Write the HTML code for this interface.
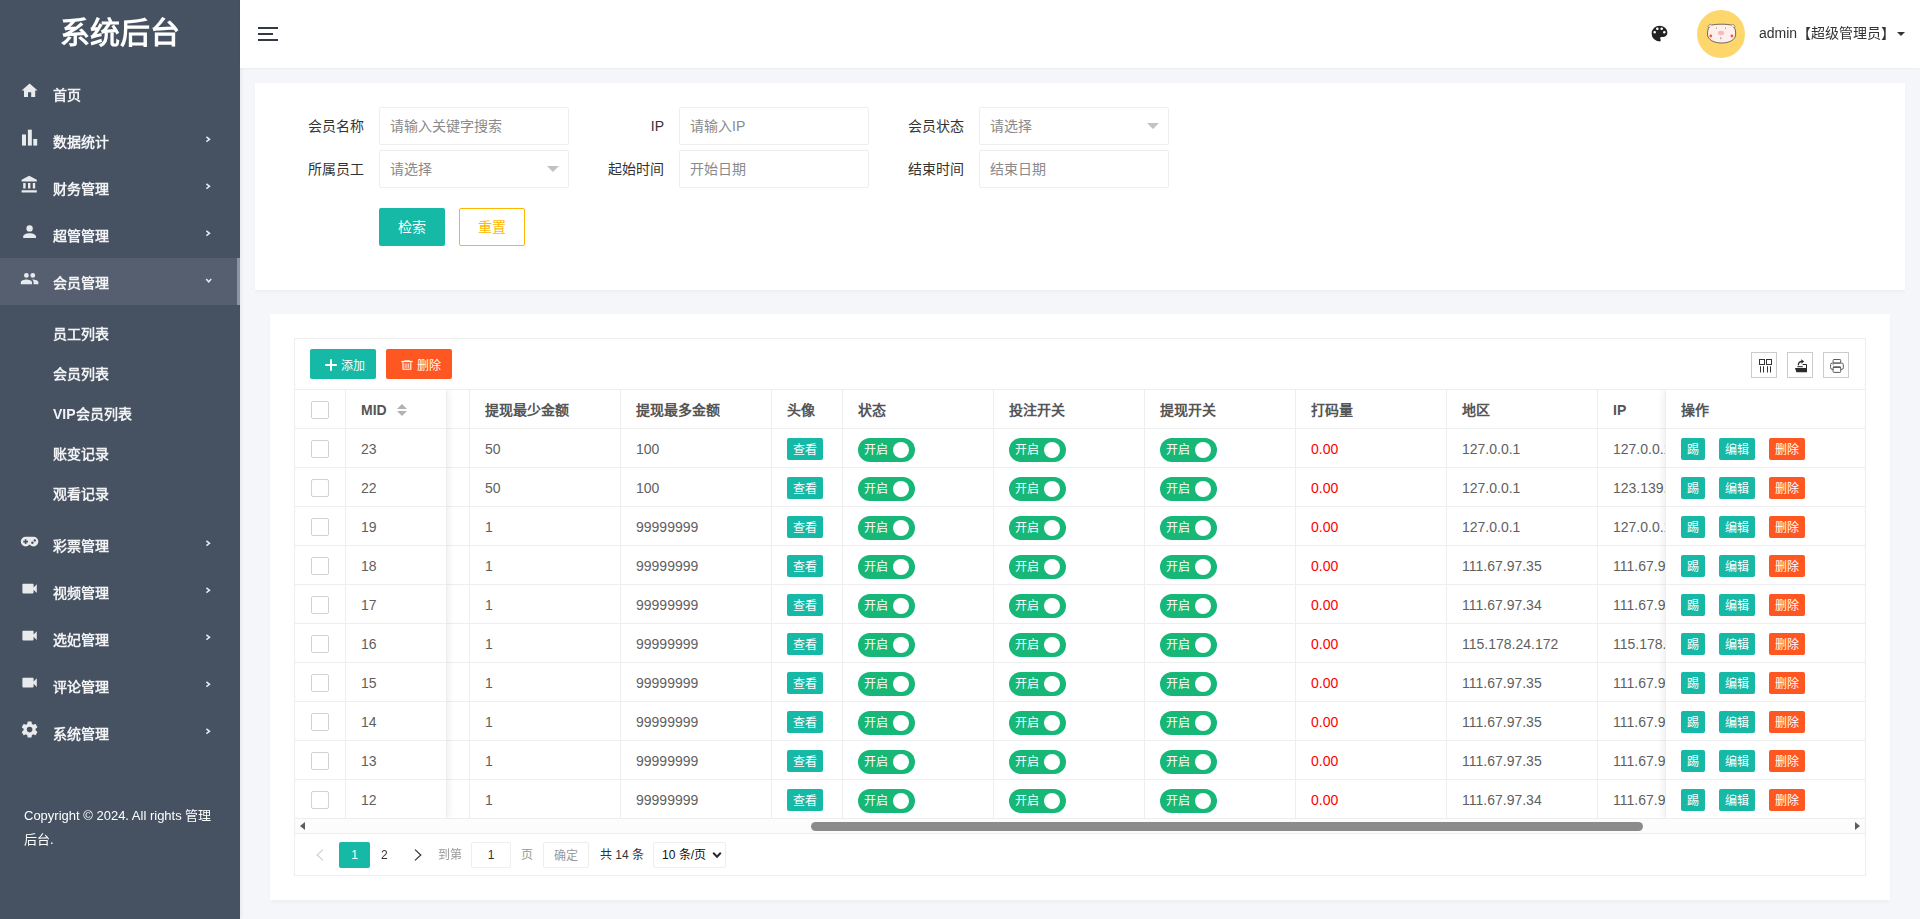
<!DOCTYPE html>
<html lang="zh-CN">
<head>
<meta charset="utf-8">
<title>系统后台</title>
<style>
*{box-sizing:border-box;margin:0;padding:0}
html,body{width:1920px;height:919px;overflow:hidden}
body{font-family:"Liberation Sans",sans-serif;font-size:14px;color:#333;background:#f5f6fa;position:relative}
div,span,svg{position:absolute}
#side{left:0;top:0;width:240px;height:919px;background:#465161;box-shadow:1px 0 4px rgba(0,10,30,.07)}
#logo{left:0;top:0;width:240px;height:68px;line-height:66px;text-align:center;font-size:30px;font-weight:bold;color:#fff}
.mi{left:0;width:240px;height:47px}
.mi.on{background:#555f70}
.mi.on i{position:absolute;right:0;top:0;width:3px;height:47px;background:#8d94a1}
.mt{left:53px;top:15px;line-height:20px;white-space:nowrap;color:#f2f3f4;font-weight:bold;font-size:14px}
.mi svg.ic{left:20.2px;top:10.7px;width:19.2px;height:19.2px;fill:#e9eaec}
.mi svg.ar{left:203px;top:17px;width:10px;height:10px;fill:none;stroke:#e9eaec;stroke-width:1.5}
.si{left:53px;color:#f2f3f4;font-weight:bold;font-size:14px;line-height:20px;white-space:nowrap}
#copy{left:24px;top:804px;width:210px;font-size:13px;line-height:23.5px;color:#fff;white-space:nowrap}
#hd{left:240px;top:0;width:1680px;height:68px;background:#fff;box-shadow:0 1px 2px rgba(0,0,0,.045)}
.card{background:#fff;box-shadow:0 2px 4px -1px rgba(0,0,0,.05)}
.lab{width:110px;height:38px;line-height:38px;text-align:right;padding-right:15px;font-size:14px;color:#333;white-space:nowrap}
.inp{width:190px;height:38px;border:1px solid #eee;border-radius:2px;background:#fff;line-height:36px;padding-left:10px;color:#8a8a8a;font-size:14px;white-space:nowrap}
.inp b{position:absolute;right:9px;top:15px;width:0;height:0;border:6px solid transparent;border-top-color:#c2c2c2;border-bottom:none}
.btn{text-align:center;color:#fff;background:#16b8a6;border-radius:2px;white-space:nowrap}
.tx{white-space:nowrap;line-height:20px}
.gl{will-change:transform}
.th{font-weight:bold;color:#555;font-size:14px;margin-top:1px}
.td{color:#5f5f5f;font-size:14px}
.hl{height:1px;background:#eee}
.vl{width:1px;background:#eee}
.cb{width:18px;height:18px;border:1px solid #d2d2d2;border-radius:2px;background:#fff}
.xs{height:22px;line-height:24px;font-size:12px;border-radius:2px;color:#fff;text-align:center;white-space:nowrap}
.sw{width:57px;height:24px;border-radius:12px;background:#16b777}
.sw em{position:absolute;left:6px;top:0;line-height:24px;font-size:12px;color:#fff;font-style:normal;white-space:nowrap}
.sw u{position:absolute;left:35px;top:4px;width:16px;height:16px;border-radius:8px;background:#fff}
.tb{width:26px;height:26px;border:1px solid #ccc;background:#fff}
</style>
</head>
<body>
<div id="side"><div class="gl" style="left:0;top:0;width:240px;height:919px">
<div id="logo">系统后台</div>
<div class="mi" style="top:70px"><svg class="ic" viewBox="0 0 24 24"><path d="M10,20V14H14V20H19V12H22L12,3L2,12H5V20H10Z"/></svg><span class="mt">首页</span></div>
<div class="mi" style="top:117px"><svg class="ic" viewBox="0 0 24 24"><rect x="2.5" y="8.1" width="5" height="13.9"/><rect x="9.9" y="2.1" width="4.9" height="19.9"/><rect x="16.6" y="13.7" width="4.9" height="8.3"/></svg><span class="mt">数据统计</span><svg class="ar" viewBox="0 0 10 10"><path d="M3.4 2.9 L6.5 5.3 L3.4 7.7"/></svg></div>
<div class="mi" style="top:164px"><svg class="ic" viewBox="0 0 24 24"><path d="M11.5,1L2,6V8H21V6M16,10V17H19V10M2,22H21V19H2M10,10V17H13V10M4,10V17H7V10H4Z"/></svg><span class="mt">财务管理</span><svg class="ar" viewBox="0 0 10 10"><path d="M3.4 2.9 L6.5 5.3 L3.4 7.7"/></svg></div>
<div class="mi" style="top:211px"><svg class="ic" viewBox="0 0 24 24"><path d="M12,4A4,4 0 0,1 16,8A4,4 0 0,1 12,12A4,4 0 0,1 8,8A4,4 0 0,1 12,4M12,14C16.42,14 20,15.79 20,18V20H4V18C4,15.79 7.58,14 12,14Z"/></svg><span class="mt">超管管理</span><svg class="ar" viewBox="0 0 10 10"><path d="M3.4 2.9 L6.5 5.3 L3.4 7.7"/></svg></div>
<div class="mi on" style="top:258px"><svg class="ic" viewBox="0 0 24 24"><path d="M16,13C15.71,13 15.38,13 15.03,13.05C16.19,13.89 17,15 17,16.5V19H23V16.5C23,14.17 18.33,13 16,13M8,13C5.67,13 1,14.17 1,16.5V19H15V16.5C15,14.17 10.33,13 8,13M8,11A3,3 0 0,0 11,8A3,3 0 0,0 8,5A3,3 0 0,0 5,8A3,3 0 0,0 8,11M16,11A3,3 0 0,0 19,8A3,3 0 0,0 16,5A3,3 0 0,0 13,8A3,3 0 0,0 16,11Z"/></svg><span class="mt">会员管理</span><svg class="ar" viewBox="0 0 10 10"><path d="M3.2 4.1 L5.7 6.8 L8.2 4.1"/></svg><i></i></div>
<span class="si" style="top:324px">员工列表</span>
<span class="si" style="top:364px">会员列表</span>
<span class="si" style="top:404px">VIP会员列表</span>
<span class="si" style="top:444px">账变记录</span>
<span class="si" style="top:484px">观看记录</span>
<div class="mi" style="top:521px"><svg class="ic" viewBox="0 0 24 24"><path d="M7,6H17A6,6 0 0,1 23,12A6,6 0 0,1 17,18C15.22,18 13.63,17.23 12.53,16H11.47C10.37,17.23 8.78,18 7,18A6,6 0 0,1 1,12A6,6 0 0,1 7,6M6,9V11H4V13H6V15H8V13H10V11H8V9H6M15.5,12A1.5,1.5 0 0,0 14,13.5A1.5,1.5 0 0,0 15.5,15A1.5,1.5 0 0,0 17,13.5A1.5,1.5 0 0,0 15.5,12M18.5,9A1.5,1.5 0 0,0 17,10.5A1.5,1.5 0 0,0 18.5,12A1.5,1.5 0 0,0 20,10.5A1.5,1.5 0 0,0 18.5,9Z"/></svg><span class="mt">彩票管理</span><svg class="ar" viewBox="0 0 10 10"><path d="M3.4 2.9 L6.5 5.3 L3.4 7.7"/></svg></div>
<div class="mi" style="top:568px"><svg class="ic" viewBox="0 0 24 24"><path d="M17,10.5V7A1,1 0 0,0 16,6H4A1,1 0 0,0 3,7V17A1,1 0 0,0 4,18H16A1,1 0 0,0 17,17V13.5L21,17.5V6.5L17,10.5Z"/></svg><span class="mt">视频管理</span><svg class="ar" viewBox="0 0 10 10"><path d="M3.4 2.9 L6.5 5.3 L3.4 7.7"/></svg></div>
<div class="mi" style="top:615px"><svg class="ic" viewBox="0 0 24 24"><path d="M17,10.5V7A1,1 0 0,0 16,6H4A1,1 0 0,0 3,7V17A1,1 0 0,0 4,18H16A1,1 0 0,0 17,17V13.5L21,17.5V6.5L17,10.5Z"/></svg><span class="mt">选妃管理</span><svg class="ar" viewBox="0 0 10 10"><path d="M3.4 2.9 L6.5 5.3 L3.4 7.7"/></svg></div>
<div class="mi" style="top:662px"><svg class="ic" viewBox="0 0 24 24"><path d="M17,10.5V7A1,1 0 0,0 16,6H4A1,1 0 0,0 3,7V17A1,1 0 0,0 4,18H16A1,1 0 0,0 17,17V13.5L21,17.5V6.5L17,10.5Z"/></svg><span class="mt">评论管理</span><svg class="ar" viewBox="0 0 10 10"><path d="M3.4 2.9 L6.5 5.3 L3.4 7.7"/></svg></div>
<div class="mi" style="top:709px"><svg class="ic" viewBox="0 0 24 24"><path d="M12,15.5A3.5,3.5 0 0,1 8.5,12A3.5,3.5 0 0,1 12,8.5A3.5,3.5 0 0,1 15.5,12A3.5,3.5 0 0,1 12,15.5M19.43,12.97C19.47,12.65 19.5,12.33 19.5,12C19.5,11.67 19.47,11.34 19.43,11L21.54,9.37C21.73,9.22 21.78,8.95 21.66,8.73L19.66,5.27C19.54,5.05 19.27,4.96 19.05,5.05L16.56,6.05C16.04,5.66 15.5,5.32 14.87,5.07L14.5,2.42C14.46,2.18 14.25,2 14,2H10C9.75,2 9.54,2.18 9.5,2.42L9.13,5.07C8.5,5.32 7.96,5.66 7.44,6.05L4.95,5.05C4.73,4.96 4.46,5.05 4.34,5.27L2.34,8.73C2.21,8.95 2.27,9.22 2.46,9.37L4.57,11C4.53,11.34 4.5,11.67 4.5,12C4.5,12.33 4.53,12.65 4.57,12.97L2.46,14.63C2.27,14.78 2.21,15.05 2.34,15.27L4.34,18.73C4.46,18.95 4.73,19.03 4.95,18.95L7.44,17.94C7.96,18.34 8.5,18.68 9.13,18.93L9.5,21.58C9.54,21.82 9.75,22 10,22H14C14.25,22 14.46,21.82 14.5,21.58L14.87,18.93C15.5,18.67 16.04,18.34 16.56,17.94L19.05,18.95C19.27,19.03 19.54,18.95 19.66,18.73L21.66,15.27C21.78,15.05 21.73,14.78 21.54,14.63L19.43,12.97Z"/></svg><span class="mt">系统管理</span><svg class="ar" viewBox="0 0 10 10"><path d="M3.4 2.9 L6.5 5.3 L3.4 7.7"/></svg></div>
</div>
<div id="copy">Copyright © 2024. All rights 管理<br>后台.</div>
</div>
<div id="hd">
<div style="left:18px;top:27px;width:20px;height:2px;background:#333a45"></div>
<div style="left:18px;top:33px;width:15px;height:2px;background:#333a45"></div>
<div style="left:18px;top:39px;width:20px;height:2px;background:#333a45"></div>
<svg viewBox="0 0 24 24" style="left:1409px;top:23px;width:21px;height:21px;fill:#222"><path d="M17.5,12A1.5,1.5 0 0,1 16,10.5A1.5,1.5 0 0,1 17.5,9A1.5,1.5 0 0,1 19,10.5A1.5,1.5 0 0,1 17.5,12M14.5,8A1.5,1.5 0 0,1 13,6.5A1.5,1.5 0 0,1 14.5,5A1.5,1.5 0 0,1 16,6.5A1.5,1.5 0 0,1 14.5,8M9.5,8A1.5,1.5 0 0,1 8,6.5A1.5,1.5 0 0,1 9.5,5A1.5,1.5 0 0,1 11,6.5A1.5,1.5 0 0,1 9.5,8M6.5,12A1.5,1.5 0 0,1 5,10.5A1.5,1.5 0 0,1 6.5,9A1.5,1.5 0 0,1 8,10.5A1.5,1.5 0 0,1 6.5,12M12,3A9,9 0 0,0 3,12A9,9 0 0,0 12,21A1.5,1.5 0 0,0 13.5,19.5C13.5,19.11 13.35,18.76 13.11,18.5C12.88,18.23 12.73,17.88 12.73,17.5A1.5,1.5 0 0,1 14.23,16H16A5,5 0 0,0 21,11C21,6.58 16.97,3 12,3Z"/></svg>
<svg viewBox="0 0 48 48" style="left:1457px;top:10px;width:48px;height:48px"><circle cx="24" cy="24" r="24" fill="#fdd76b"/><path d="M10.500 24 C10.500 19.500 11.500 16.500 14.500 15.200 C18 13.900 31 13.900 34.500 15.200 C37.500 16.500 38.700 19.500 38.700 24 C38.700 30 32 33 24.600 33 C17.200 33 10.500 30 10.500 24Z" fill="#fdefee" stroke="#3c3030" stroke-width=".7"/><ellipse cx="12.700" cy="16" rx="2" ry="1.300" transform="rotate(-38 12.700 16)" fill="#fbe0e0" stroke="#5a4848" stroke-width=".45"/><ellipse cx="36.300" cy="16" rx="2" ry="1.300" transform="rotate(38 36.300 16)" fill="#fbe0e0" stroke="#5a4848" stroke-width=".45"/><path d="M13.300 17.600 L15.200 15.800 M35.700 17.600 L33.800 15.800" stroke="#fdefee" stroke-width="1.600"/><ellipse cx="24" cy="23" rx="2.900" ry="1.900" fill="#f6bcbc" stroke="#d9a0a0" stroke-width=".3"/><circle cx="13.800" cy="26" r="1.400" fill="#ff5a2a"/><circle cx="34.900" cy="26" r="1.400" fill="#ff5a2a"/><rect x="19.200" y="17.600" width=".6" height="1.300" fill="#666"/><rect x="28.400" y="17.600" width=".6" height="1.300" fill="#666"/><path d="M23.800 27.200 v2" stroke="#555" stroke-width=".6"/></svg>
<div class="gl" style="left:1510px;top:15px;width:150px;height:36px"><span class="tx" style="left:9px;top:8px;color:#333">admin【超级管理员】</span></div>
<div style="left:1657px;top:32px;width:0;height:0;border:4px solid transparent;border-top-color:#333;border-bottom:none"></div>
</div>
<div class="card" style="left:255px;top:83px;width:1650px;height:207px">
<div class="lab" style="left:14px;top:24px">会员名称</div>
<div class="inp" style="left:124px;top:24px">请输入关键字搜索</div>
<div class="lab" style="left:314px;top:24px">IP</div>
<div class="inp" style="left:424px;top:24px">请输入IP</div>
<div class="lab" style="left:614px;top:24px">会员状态</div>
<div class="inp" style="left:724px;top:24px">请选择<b></b></div>
<div class="lab" style="left:14px;top:67px">所属员工</div>
<div class="inp" style="left:124px;top:67px">请选择<b></b></div>
<div class="lab" style="left:314px;top:67px">起始时间</div>
<div class="inp" style="left:424px;top:67px">开始日期</div>
<div class="lab" style="left:614px;top:67px">结束时间</div>
<div class="inp" style="left:724px;top:67px">结束日期</div>
<div class="btn" style="left:124px;top:125px;width:66px;height:38px;line-height:38px">检索</div>
<div class="btn" style="left:204px;top:125px;width:66px;height:38px;line-height:36px;background:#fff;border:1px solid #ffb800;color:#ffb800">重置</div>
</div>
<div class="card" style="left:270px;top:314px;width:1620px;height:586px">
<div style="left:24px;top:24px;width:1572px;height:538px;border:1px solid #eee"></div>
<div class="btn" style="left:40px;top:35px;width:66px;height:30px;line-height:30px;font-size:12px"><svg viewBox="0 0 12 12" style="left:15px;top:10.2px;width:12px;height:12px"><path d="M6 .2v11.6M.2 6h11.6" stroke="#fff" stroke-width="2"/></svg><span style="left:31px;top:2px">添加</span></div>
<div class="btn" style="left:116px;top:35px;width:66px;height:30px;line-height:30px;font-size:12px;background:#ff5722"><svg viewBox="0 0 12 10" style="left:15px;top:11px;width:12px;height:10px" fill="none" stroke="#fff"><path d="M3.6 1.1V.4H8.2V1.1" stroke-width=".8"/><path d="M.2 1.5H11.7" stroke-width="1.2"/><path d="M2 2.2V9.3H9.8V2.2" stroke-width="1.1"/><path d="M4.1 3.4V8.2M5.9 3.4V8.2M7.7 3.4V8.2" stroke-width=".8"/></svg><span style="left:31px;top:2px">删除</span></div>
<div class="tb" style="left:1481px;top:38px">
<svg viewBox="0 0 24 24" style="left:0;top:0;width:24px;height:24px" fill="none" stroke="#333" stroke-width="1"><rect x="7.5" y="6.5" width="5" height="5"/><rect x="14.5" y="6.5" width="5" height="5"/><path d="M8.5 13.3v6.200M11.5 13.3v6.200M15.5 13.3v6.200M18.5 13.3v6.200"/></svg>
</div>
<div class="tb" style="left:1517px;top:38px">
<svg viewBox="0 0 24 24" style="left:0;top:0;width:24px;height:24px"><path d="M7 15.100H19V19.200H8.400z" fill="#2b2b2b"/><path d="M9.400 13.700H14.800" fill="none" stroke="#2b2b2b" stroke-width="1"/><path d="M14.600 11.500H18.500V15.200" fill="none" stroke="#2b2b2b" stroke-width="1"/><path d="M10.300 12.300C10.300 9.700 11.600 8.500 13.800 8.500" fill="none" stroke="#2b2b2b" stroke-width="1.300"/><path d="M13.300 6.200L16.200 8.500L13.300 10.700z" fill="#2b2b2b"/></svg>
</div>
<div class="tb" style="left:1553px;top:38px">
<svg viewBox="0 0 24 24" style="left:0;top:0;width:24px;height:24px" fill="none" stroke="#5a5a5a" stroke-width="1"><rect x="9.100" y="6.500" width="7.600" height="3.600" rx=".8"/><rect x="6.600" y="10.100" width="12.700" height="6.300" rx="1.600"/><rect x="9.100" y="14.100" width="7.600" height="5.300" rx=".8" fill="#fff"/><path d="M9.100 14.100H16.700" stroke="#333"/><path d="M8.600 11.800h1.200" stroke-width=".8"/></svg>
</div>
<div class="hl" style="left:25px;top:75px;width:1570px"></div>
<div class="hl" style="left:25px;top:114px;width:1570px"></div>
<div class="hl" style="left:25px;top:153px;width:1570px"></div>
<div class="hl" style="left:25px;top:192px;width:1570px"></div>
<div class="hl" style="left:25px;top:231px;width:1570px"></div>
<div class="hl" style="left:25px;top:270px;width:1570px"></div>
<div class="hl" style="left:25px;top:309px;width:1570px"></div>
<div class="hl" style="left:25px;top:348px;width:1570px"></div>
<div class="hl" style="left:25px;top:387px;width:1570px"></div>
<div class="hl" style="left:25px;top:426px;width:1570px"></div>
<div class="hl" style="left:25px;top:465px;width:1570px"></div>
<div class="hl" style="left:25px;top:504px;width:1570px"></div>
<div class="vl" style="left:199px;top:76px;height:429px"></div>
<div class="vl" style="left:350px;top:76px;height:429px"></div>
<div class="vl" style="left:501px;top:76px;height:429px"></div>
<div class="vl" style="left:572px;top:76px;height:429px"></div>
<div class="vl" style="left:723px;top:76px;height:429px"></div>
<div class="vl" style="left:874px;top:76px;height:429px"></div>
<div class="vl" style="left:1025px;top:76px;height:429px"></div>
<div class="vl" style="left:1176px;top:76px;height:429px"></div>
<div class="vl" style="left:1327px;top:76px;height:429px"></div>
<span class="tx th" style="left:215px;top:85px">提现最少金额</span>
<span class="tx th" style="left:366px;top:85px">提现最多金额</span>
<span class="tx th" style="left:517px;top:85px">头像</span>
<span class="tx th" style="left:588px;top:85px">状态</span>
<span class="tx th" style="left:739px;top:85px">投注开关</span>
<span class="tx th" style="left:890px;top:85px">提现开关</span>
<span class="tx th" style="left:1041px;top:85px">打码量</span>
<span class="tx th" style="left:1192px;top:85px">地区</span>
<span class="tx th" style="left:1343px;top:85px">IP</span>
<span class="tx td" style="left:215px;top:125px">50</span>
<span class="tx td" style="left:366px;top:125px">100</span>
<div class="xs" style="left:517px;top:124px;width:36px;background:#16b8a6">查看</div>
<div class="sw" style="left:588px;top:124px"><em>开启</em><u></u></div>
<div class="sw" style="left:739px;top:124px"><em>开启</em><u></u></div>
<div class="sw" style="left:890px;top:124px"><em>开启</em><u></u></div>
<span class="tx td" style="left:1041px;top:125px;color:#f00">0.00</span>
<span class="tx td" style="left:1192px;top:125px">127.0.0.1</span>
<span class="tx td" style="left:1343px;top:125px">127.0.0.1</span>
<span class="tx td" style="left:215px;top:164px">50</span>
<span class="tx td" style="left:366px;top:164px">100</span>
<div class="xs" style="left:517px;top:163px;width:36px;background:#16b8a6">查看</div>
<div class="sw" style="left:588px;top:163px"><em>开启</em><u></u></div>
<div class="sw" style="left:739px;top:163px"><em>开启</em><u></u></div>
<div class="sw" style="left:890px;top:163px"><em>开启</em><u></u></div>
<span class="tx td" style="left:1041px;top:164px;color:#f00">0.00</span>
<span class="tx td" style="left:1192px;top:164px">127.0.0.1</span>
<span class="tx td" style="left:1343px;top:164px">123.139.1.1</span>
<span class="tx td" style="left:215px;top:203px">1</span>
<span class="tx td" style="left:366px;top:203px">99999999</span>
<div class="xs" style="left:517px;top:202px;width:36px;background:#16b8a6">查看</div>
<div class="sw" style="left:588px;top:202px"><em>开启</em><u></u></div>
<div class="sw" style="left:739px;top:202px"><em>开启</em><u></u></div>
<div class="sw" style="left:890px;top:202px"><em>开启</em><u></u></div>
<span class="tx td" style="left:1041px;top:203px;color:#f00">0.00</span>
<span class="tx td" style="left:1192px;top:203px">127.0.0.1</span>
<span class="tx td" style="left:1343px;top:203px">127.0.0.1</span>
<span class="tx td" style="left:215px;top:242px">1</span>
<span class="tx td" style="left:366px;top:242px">99999999</span>
<div class="xs" style="left:517px;top:241px;width:36px;background:#16b8a6">查看</div>
<div class="sw" style="left:588px;top:241px"><em>开启</em><u></u></div>
<div class="sw" style="left:739px;top:241px"><em>开启</em><u></u></div>
<div class="sw" style="left:890px;top:241px"><em>开启</em><u></u></div>
<span class="tx td" style="left:1041px;top:242px;color:#f00">0.00</span>
<span class="tx td" style="left:1192px;top:242px">111.67.97.35</span>
<span class="tx td" style="left:1343px;top:242px">111.67.97.35</span>
<span class="tx td" style="left:215px;top:281px">1</span>
<span class="tx td" style="left:366px;top:281px">99999999</span>
<div class="xs" style="left:517px;top:280px;width:36px;background:#16b8a6">查看</div>
<div class="sw" style="left:588px;top:280px"><em>开启</em><u></u></div>
<div class="sw" style="left:739px;top:280px"><em>开启</em><u></u></div>
<div class="sw" style="left:890px;top:280px"><em>开启</em><u></u></div>
<span class="tx td" style="left:1041px;top:281px;color:#f00">0.00</span>
<span class="tx td" style="left:1192px;top:281px">111.67.97.34</span>
<span class="tx td" style="left:1343px;top:281px">111.67.97.34</span>
<span class="tx td" style="left:215px;top:320px">1</span>
<span class="tx td" style="left:366px;top:320px">99999999</span>
<div class="xs" style="left:517px;top:319px;width:36px;background:#16b8a6">查看</div>
<div class="sw" style="left:588px;top:319px"><em>开启</em><u></u></div>
<div class="sw" style="left:739px;top:319px"><em>开启</em><u></u></div>
<div class="sw" style="left:890px;top:319px"><em>开启</em><u></u></div>
<span class="tx td" style="left:1041px;top:320px;color:#f00">0.00</span>
<span class="tx td" style="left:1192px;top:320px">115.178.24.172</span>
<span class="tx td" style="left:1343px;top:320px">115.178.24.172</span>
<span class="tx td" style="left:215px;top:359px">1</span>
<span class="tx td" style="left:366px;top:359px">99999999</span>
<div class="xs" style="left:517px;top:358px;width:36px;background:#16b8a6">查看</div>
<div class="sw" style="left:588px;top:358px"><em>开启</em><u></u></div>
<div class="sw" style="left:739px;top:358px"><em>开启</em><u></u></div>
<div class="sw" style="left:890px;top:358px"><em>开启</em><u></u></div>
<span class="tx td" style="left:1041px;top:359px;color:#f00">0.00</span>
<span class="tx td" style="left:1192px;top:359px">111.67.97.35</span>
<span class="tx td" style="left:1343px;top:359px">111.67.97.35</span>
<span class="tx td" style="left:215px;top:398px">1</span>
<span class="tx td" style="left:366px;top:398px">99999999</span>
<div class="xs" style="left:517px;top:397px;width:36px;background:#16b8a6">查看</div>
<div class="sw" style="left:588px;top:397px"><em>开启</em><u></u></div>
<div class="sw" style="left:739px;top:397px"><em>开启</em><u></u></div>
<div class="sw" style="left:890px;top:397px"><em>开启</em><u></u></div>
<span class="tx td" style="left:1041px;top:398px;color:#f00">0.00</span>
<span class="tx td" style="left:1192px;top:398px">111.67.97.35</span>
<span class="tx td" style="left:1343px;top:398px">111.67.97.35</span>
<span class="tx td" style="left:215px;top:437px">1</span>
<span class="tx td" style="left:366px;top:437px">99999999</span>
<div class="xs" style="left:517px;top:436px;width:36px;background:#16b8a6">查看</div>
<div class="sw" style="left:588px;top:436px"><em>开启</em><u></u></div>
<div class="sw" style="left:739px;top:436px"><em>开启</em><u></u></div>
<div class="sw" style="left:890px;top:436px"><em>开启</em><u></u></div>
<span class="tx td" style="left:1041px;top:437px;color:#f00">0.00</span>
<span class="tx td" style="left:1192px;top:437px">111.67.97.35</span>
<span class="tx td" style="left:1343px;top:437px">111.67.97.35</span>
<span class="tx td" style="left:215px;top:476px">1</span>
<span class="tx td" style="left:366px;top:476px">99999999</span>
<div class="xs" style="left:517px;top:475px;width:36px;background:#16b8a6">查看</div>
<div class="sw" style="left:588px;top:475px"><em>开启</em><u></u></div>
<div class="sw" style="left:739px;top:475px"><em>开启</em><u></u></div>
<div class="sw" style="left:890px;top:475px"><em>开启</em><u></u></div>
<span class="tx td" style="left:1041px;top:476px;color:#f00">0.00</span>
<span class="tx td" style="left:1192px;top:476px">111.67.97.34</span>
<span class="tx td" style="left:1343px;top:476px">111.67.97.34</span>
<div style="left:25px;top:76px;width:152px;height:429px;background:#fff;box-shadow:1px 0 8px rgba(0,0,0,.08);clip-path:inset(0 -12px 0 0)">
<div class="vl" style="left:50px;top:0;height:429px"></div>
<div class="vl" style="left:151px;top:0;height:429px"></div>
<div class="hl" style="left:0;top:38px;width:152px"></div>
<div class="hl" style="left:0;top:77px;width:152px"></div>
<div class="hl" style="left:0;top:116px;width:152px"></div>
<div class="hl" style="left:0;top:155px;width:152px"></div>
<div class="hl" style="left:0;top:194px;width:152px"></div>
<div class="hl" style="left:0;top:233px;width:152px"></div>
<div class="hl" style="left:0;top:272px;width:152px"></div>
<div class="hl" style="left:0;top:311px;width:152px"></div>
<div class="hl" style="left:0;top:350px;width:152px"></div>
<div class="hl" style="left:0;top:389px;width:152px"></div>
<div class="hl" style="left:0;top:428px;width:152px"></div>
<div class="cb" style="left:16px;top:11px"></div>
<span class="tx th" style="left:66px;top:9px">MID</span>
<div style="left:102px;top:14px;width:0;height:0;border:5px solid transparent;border-bottom-color:#b2b2b2;border-top:none"></div>
<div style="left:102px;top:21px;width:0;height:0;border:5px solid transparent;border-top-color:#b2b2b2;border-bottom:none"></div>
<div class="cb" style="left:16px;top:50px"></div>
<span class="tx td" style="left:66px;top:49px">23</span>
<div class="cb" style="left:16px;top:89px"></div>
<span class="tx td" style="left:66px;top:88px">22</span>
<div class="cb" style="left:16px;top:128px"></div>
<span class="tx td" style="left:66px;top:127px">19</span>
<div class="cb" style="left:16px;top:167px"></div>
<span class="tx td" style="left:66px;top:166px">18</span>
<div class="cb" style="left:16px;top:206px"></div>
<span class="tx td" style="left:66px;top:205px">17</span>
<div class="cb" style="left:16px;top:245px"></div>
<span class="tx td" style="left:66px;top:244px">16</span>
<div class="cb" style="left:16px;top:284px"></div>
<span class="tx td" style="left:66px;top:283px">15</span>
<div class="cb" style="left:16px;top:323px"></div>
<span class="tx td" style="left:66px;top:322px">14</span>
<div class="cb" style="left:16px;top:362px"></div>
<span class="tx td" style="left:66px;top:361px">13</span>
<div class="cb" style="left:16px;top:401px"></div>
<span class="tx td" style="left:66px;top:400px">12</span>
</div>
<div style="left:1395px;top:76px;width:200px;height:429px;background:#fff;box-shadow:-1px 0 8px rgba(0,0,0,.08);clip-path:inset(0 0 0 -12px)">
<div class="vl" style="left:0;top:0;height:429px"></div>
<div class="hl" style="left:0;top:38px;width:200px"></div>
<div class="hl" style="left:0;top:77px;width:200px"></div>
<div class="hl" style="left:0;top:116px;width:200px"></div>
<div class="hl" style="left:0;top:155px;width:200px"></div>
<div class="hl" style="left:0;top:194px;width:200px"></div>
<div class="hl" style="left:0;top:233px;width:200px"></div>
<div class="hl" style="left:0;top:272px;width:200px"></div>
<div class="hl" style="left:0;top:311px;width:200px"></div>
<div class="hl" style="left:0;top:350px;width:200px"></div>
<div class="hl" style="left:0;top:389px;width:200px"></div>
<div class="hl" style="left:0;top:428px;width:200px"></div>
<span class="tx th" style="left:16px;top:9px">操作</span>
<div class="xs" style="left:16px;top:48px;width:24px;background:#16b8a6">踢</div>
<div class="xs" style="left:54px;top:48px;width:36px;background:#16b8a6">编辑</div>
<div class="xs" style="left:104px;top:48px;width:36px;background:#ff5722">删除</div>
<div class="xs" style="left:16px;top:87px;width:24px;background:#16b8a6">踢</div>
<div class="xs" style="left:54px;top:87px;width:36px;background:#16b8a6">编辑</div>
<div class="xs" style="left:104px;top:87px;width:36px;background:#ff5722">删除</div>
<div class="xs" style="left:16px;top:126px;width:24px;background:#16b8a6">踢</div>
<div class="xs" style="left:54px;top:126px;width:36px;background:#16b8a6">编辑</div>
<div class="xs" style="left:104px;top:126px;width:36px;background:#ff5722">删除</div>
<div class="xs" style="left:16px;top:165px;width:24px;background:#16b8a6">踢</div>
<div class="xs" style="left:54px;top:165px;width:36px;background:#16b8a6">编辑</div>
<div class="xs" style="left:104px;top:165px;width:36px;background:#ff5722">删除</div>
<div class="xs" style="left:16px;top:204px;width:24px;background:#16b8a6">踢</div>
<div class="xs" style="left:54px;top:204px;width:36px;background:#16b8a6">编辑</div>
<div class="xs" style="left:104px;top:204px;width:36px;background:#ff5722">删除</div>
<div class="xs" style="left:16px;top:243px;width:24px;background:#16b8a6">踢</div>
<div class="xs" style="left:54px;top:243px;width:36px;background:#16b8a6">编辑</div>
<div class="xs" style="left:104px;top:243px;width:36px;background:#ff5722">删除</div>
<div class="xs" style="left:16px;top:282px;width:24px;background:#16b8a6">踢</div>
<div class="xs" style="left:54px;top:282px;width:36px;background:#16b8a6">编辑</div>
<div class="xs" style="left:104px;top:282px;width:36px;background:#ff5722">删除</div>
<div class="xs" style="left:16px;top:321px;width:24px;background:#16b8a6">踢</div>
<div class="xs" style="left:54px;top:321px;width:36px;background:#16b8a6">编辑</div>
<div class="xs" style="left:104px;top:321px;width:36px;background:#ff5722">删除</div>
<div class="xs" style="left:16px;top:360px;width:24px;background:#16b8a6">踢</div>
<div class="xs" style="left:54px;top:360px;width:36px;background:#16b8a6">编辑</div>
<div class="xs" style="left:104px;top:360px;width:36px;background:#ff5722">删除</div>
<div class="xs" style="left:16px;top:399px;width:24px;background:#16b8a6">踢</div>
<div class="xs" style="left:54px;top:399px;width:36px;background:#16b8a6">编辑</div>
<div class="xs" style="left:104px;top:399px;width:36px;background:#ff5722">删除</div>
</div>
<div style="left:25px;top:505px;width:1570px;height:14px;background:#fcfcfc"></div>
<div class="hl" style="left:25px;top:519px;width:1570px"></div>
<div style="left:541px;top:508px;width:832px;height:9px;border-radius:4.5px;background:#8b8b8b"></div>
<div style="left:30px;top:508px;width:0;height:0;border:4.5px solid transparent;border-right:5.5px solid #5c5c5c;border-left:none"></div>
<div style="left:1585px;top:508px;width:0;height:0;border:4.5px solid transparent;border-left:5.5px solid #5c5c5c;border-right:none"></div>
<svg viewBox="0 0 8 12" style="left:46px;top:535px;width:8px;height:12px" fill="none" stroke="#d2d2d2" stroke-width="1.2"><path d="M7 .6 L1.200 6 L7 11.400"/></svg>
<div class="btn" style="left:69px;top:528px;width:31px;height:26px;line-height:26px;font-size:12px">1</div>
<span class="tx" style="left:111px;top:531px;font-size:12px;color:#333">2</span>
<svg viewBox="0 0 8 12" style="left:144px;top:535px;width:8px;height:12px" fill="none" stroke="#333" stroke-width="1.2"><path d="M1 .6 L6.800 6 L1 11.400"/></svg>
<span class="tx" style="left:168px;top:531px;font-size:12px;color:#999">到第</span>
<div style="left:201px;top:528px;width:40px;height:26px;border:1px solid #eee;border-radius:2px;line-height:24px;text-align:center;font-size:12px;color:#333">1</div>
<span class="tx" style="left:251px;top:531px;font-size:12px;color:#999">页</span>
<div style="left:273px;top:528px;width:46px;height:26px;border:1px solid #eee;border-radius:2px;line-height:26px;text-align:center;font-size:12px;color:#999">确定</div>
<span class="tx" style="left:330px;top:531px;font-size:12px;color:#333">共 14 条</span>
<div style="left:383px;top:528px;width:73px;height:26px;border:1px solid #eee;border-radius:2px;line-height:24px;font-size:12px;color:#111;padding-left:8px;white-space:nowrap">10 条/页<svg viewBox="0 0 10 10" style="left:58px;top:7px;width:10px;height:10px" fill="none" stroke="#2a2a2a" stroke-width="2"><path d="M1.200 2.800 L5 6.800 L8.800 2.800"/></svg></div>
</div>
</body>
</html>
